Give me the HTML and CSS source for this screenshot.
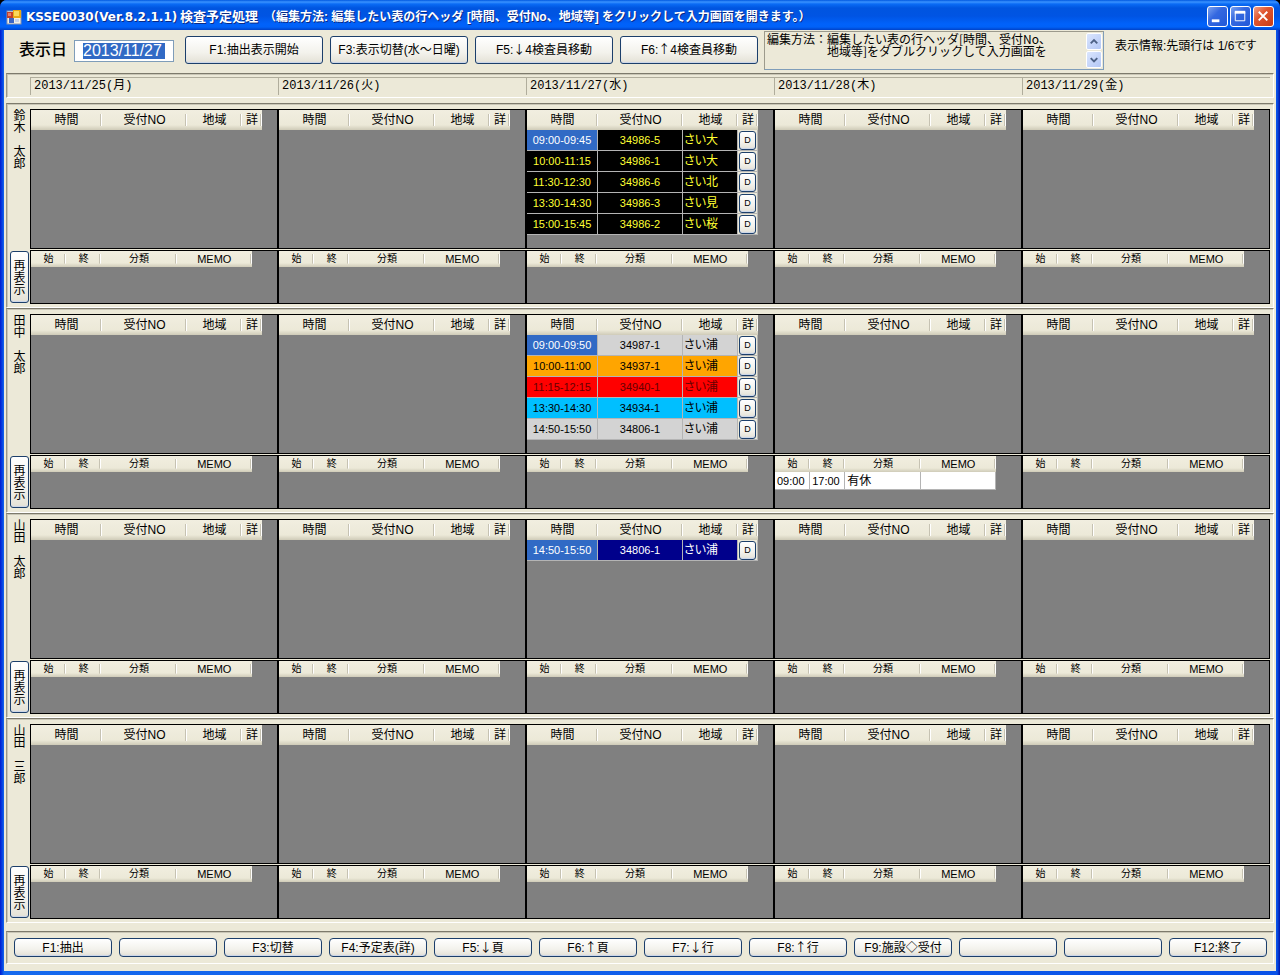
FILE: index.html
```
<!DOCTYPE html>
<html lang="ja">
<head>
<meta charset="utf-8">
<title>検査予定処理</title>
<link rel="stylesheet" href="styles.css">
</head>
<body>
<div class="window">
  <header class="titlebar">
    <svg class="app-icon" viewBox="0 0 16 16" aria-hidden="true">
      <rect x="1" y="2" width="14" height="13" fill="#f4f1e4" stroke="#8a93ad"/>
      <rect x="1" y="3" width="6" height="6" fill="#c5402b"/>
      <rect x="2" y="4" width="3" height="3" fill="#e98066"/>
      <rect x="7" y="1" width="8" height="8" fill="#e9a915"/>
      <rect x="8" y="2" width="5" height="5" fill="#fbd95c"/>
      <rect x="3" y="9" width="5" height="5" fill="#3c66c4"/>
      <rect x="9" y="10" width="4" height="3" fill="#c9d3ea"/>
    </svg>
    <h1 class="title"><span class="title-code">KSSE0030(Ver.8.2.1.1)</span><span class="title-name">検査予定処理</span><span class="title-hint">（編集方法: 編集したい表の行ヘッダ [時間、受付No、地域等] をクリックして入力画面を開きます。）</span></h1>
    <div class="window-buttons">
      <button class="win-button" type="button" aria-label="最小化"><svg viewBox="0 0 20 20"><rect x="4" y="13" width="8" height="3" fill="#fff"/></svg></button>
      <button class="win-button" type="button" aria-label="最大化"><svg viewBox="0 0 20 20"><path d="M4.500 5v9.500h10V5" fill="none" stroke="#fff"/><rect x="4" y="4" width="11" height="3" fill="#fff"/></svg></button>
      <button class="win-button win-close" type="button" aria-label="閉じる"><svg viewBox="0 0 20 20"><path d="M5 5l9 9M14 5l-9 9" stroke="#fff" stroke-width="2" fill="none"/></svg></button>
    </div>
  </header>

  <main class="client">
    <div class="toolbar">
      <label class="date-label" for="date">表示日</label>
      <div class="date-box"><input class="date-input" id="date" type="text" value="2013/11/27"></div>
      <div class="commands">
        <button class="xp-button command" type="button">F1:抽出表示開始</button>
        <button class="xp-button command" type="button">F3:表示切替(水～日曜)</button>
        <button class="xp-button command" type="button">F5:<span class="arrow">↓</span>4検査員移動</button>
        <button class="xp-button command" type="button">F6:<span class="arrow">↑</span>4検査員移動</button>
      </div>
      <div class="help">
        <textarea class="help-text" readonly aria-label="編集方法">編集方法：編集したい表の行ヘッダ[時間、受付No、
　　　　　地域等]をダブルクリックして入力画面を</textarea>
        <div class="scroller">
          <button class="scroll-button" type="button" aria-label="上へ"><svg viewBox="0 0 14 16"><path d="M3.500 10L7 6.500l3.500 3.500" fill="none" stroke="#4d6185" stroke-width="2"/></svg></button>
          <button class="scroll-button" type="button" aria-label="下へ"><svg viewBox="0 0 14 16"><path d="M3.500 6.500L7 10l3.500-3.500" fill="none" stroke="#4d6185" stroke-width="2"/></svg></button>
        </div>
      </div>
      <p class="status">表示情報:先頭行は 1/6です</p>
    </div>

    <div class="panel dates" id="dates"></div>
    <div class="inspectors" id="inspectors"></div>
    <nav class="panel function-keys" id="function-keys" aria-label="ファンクションキー"></nav>
  </main>
</div>
<script src="app.js"></script>
</body>
</html>
```
FILE: styles.css
```
* { box-sizing: border-box; }

body {
  margin: 0;
  background: #000;
  color: #000;
  font: 12px/14px "Liberation Sans", "Noto Sans CJK JP", sans-serif;
  font-feature-settings: "palt";
}

button, input, textarea { font: inherit; color: inherit; font-feature-settings: inherit; }

.window {
  border-radius: 7px 7px 0 0;
  overflow: hidden;
  padding: 0 4px 4px;
  background: linear-gradient(90deg, #0019cf 0, #0a52e8 3px, #166aee 4px, #0a52e8 calc(100% - 3px), #0014a8 100%);
}

/* Title bar */
.titlebar {
  display: flex;
  align-items: center;
  gap: 4px;
  height: 30px;
  margin: 0 -4px;
  padding: 3px 6px 0 6px;
  background: linear-gradient(180deg, #0058e0 0, #3a93ff 2px, #0a6bf5 4px, #0055e0 8px, #0054e3 16px, #0062fb 24px, #0061f8 27px, #0042c8 30px);
}
.app-icon { width: 16px; height: 16px; flex: none; }
.title {
  flex: 1;
  display: flex;
  margin: 0;
  color: #fff;
  font-size: 12px;
  font-weight: 700;
  line-height: 16px;
  white-space: nowrap;
  text-shadow: 1px 1px 0 #0a2a86;
}
.title-code { font-family: "DejaVu Sans", sans-serif; width: 154px; }
.title-name { font-size: 13px; width: 84px; }
.title-hint { font-feature-settings: normal; }
.window-buttons { display: flex; gap: 2px; }
.win-button {
  width: 21px;
  height: 21px;
  padding: 0;
  border: 1px solid #fff;
  border-radius: 3px;
  background: linear-gradient(135deg, #7ba2f0 0, #3468e0 40%, #2158d8 100%);
}
.win-button svg { display: block; width: 19px; height: 19px; }
.win-close { background: linear-gradient(135deg, #f0a088 0, #e0552f 40%, #c83c14 100%); }

/* Client area */
.client {
  background: #ece9d8;
  padding: 0 2px 7px;
}
.toolbar {
  display: flex;
  align-items: flex-start;
  height: 43px;
  padding-left: 13px;
}
.date-label {
  width: 55px;
  padding-top: 10px;
  font-size: 16px;
  font-weight: 500;
  line-height: 20px;
}
.date-box {
  width: 100px;
  height: 22px;
  margin: 10px 11px 0 0;
  padding: 2px 8px;
  border: 1px solid #7f9db9;
  background: #fff;
}
.date-input {
  display: block;
  width: 82px;
  height: 16px;
  padding: 0;
  border: 0;
  outline: 0;
  background: #316ac5;
  color: #fff;
  font-size: 16px;
  line-height: 16px;
}
.commands { display: flex; gap: 7px; margin: 6px 6px 0 0; }
.xp-button {
  display: block;
  padding: 0;
  border: 1px solid #1c3f6b;
  border-radius: 3px;
  background: linear-gradient(180deg, #fff 0, #f3f2ec 60%, #e4e1d6 100%);
  box-shadow: inset 0 -1px 1px #c9d5ea, inset 0 1px 1px #fff;
  color: #000;
  white-space: nowrap;
  overflow: hidden;
}
.command { width: 138px; height: 28px; }
.arrow { font-family: "Noto Sans CJK JP", sans-serif; line-height: 1; }
.help {
  display: flex;
  width: 340px;
  height: 39px;
  margin-top: 1px;
  padding: 1px;
  border: 1px solid #9c9a8c;
  border-right-color: #7f9db9;
  border-bottom-color: #7f9db9;
}
.help-text {
  flex: 1;
  padding: 0 1px;
  border: 0;
  outline: 0;
  resize: none;
  overflow: hidden;
  background: none;
  font-family: "Noto Sans CJK JP", sans-serif;
  font-feature-settings: normal;
  line-height: 12px;
  white-space: pre;
}
.scroller { display: flex; flex-direction: column; gap: 1px; width: 16px; }
.scroll-button {
  flex: 1;
  padding: 0;
  border: 1px solid #fff;
  border-radius: 2px;
  background: linear-gradient(135deg, #dbe6fe, #b3c7f5);
}
.scroll-button svg { display: block; width: 14px; height: 15px; }
.status { margin: 9px 0 0 11px; white-space: nowrap; }

.panel {
  border-top: 1px solid #7d7a6c;
  border-left: 1px solid #9a9788;
  border-right: 1px solid #fff;
  border-bottom: 1px solid #fff;
  box-shadow: inset 1px 1px 0 #c9c6b6;
}

/* Date header */
.dates {
  display: flex;
  height: 25px;
  padding: 3px 3px 0 23px;
}
.date-cell {
  flex: 1;
  height: 18px;
  padding-left: 3px;
  border: solid #b0ad9c;
  border-width: 1px 0 0 1px;
  font-family: "Liberation Mono", "Noto Sans CJK JP", monospace;
  line-height: 17px;
  font-feature-settings: normal;
}

/* Inspector rows */
.inspectors { padding-top: 5px; }
.inspector {
  display: flex;
  height: 205px;
  padding: 5px 3px 3px 0;
}
.side {
  display: flex;
  flex-direction: column;
  justify-content: space-between;
  align-items: center;
  width: 23px;
  padding: 0 0 1px 1px;
}
.person, .reload {
  writing-mode: vertical-rl;
  font-family: "Noto Sans CJK JP", sans-serif;
  font-feature-settings: normal;
}
.person { margin: 0; font-size: 12px; font-weight: 400; line-height: 18px; }
.reload { width: 19px; height: 52px; text-align: center; line-height: 16px; }
.days { flex: 1; display: grid; grid-template-columns: repeat(5, 1fr); }
.day { display: flex; flex-direction: column; gap: 1px; }
.pane { border: 1px solid #000; background: #808080; overflow: hidden; }
.visits { flex: 1; }
.memos { height: 54px; }

.grid { border-collapse: separate; border-spacing: 0; table-layout: fixed; }
.grid th {
  padding: 0;
  font-weight: 400;
  background:
    linear-gradient(#c6c2b2, #c6c2b2) right 1px center / 1px 60% no-repeat,
    linear-gradient(#fff, #fff) right center / 1px 60% no-repeat,
    linear-gradient(180deg, #f1eee0 0, #ece9d8 75%, #cfcbb8 100%);
  text-align: center;
  white-space: nowrap;
}
.grid td { padding: 0; border: 1px solid #b4b4b4; border-width: 0 1px 1px 0; white-space: nowrap; }
.visit-grid { width: 231px; }
.visit-grid th { height: 20px; }
.visit-grid td { height: 21px; text-align: center; font-size: 11px; }
.visit-grid .area { text-align: left; padding-left: 1px; font-size: 12px; }
.visit-grid .detail { background: #ece9d8; }
.memo-grid { width: 221px; }
.memo-grid th { height: 16px; font-size: 10px; line-height: 12px; }
.memo-grid .memo-head { font-size: 11px; }
.memo-grid td { height: 18px; padding-left: 2px; background: #fff; font-size: 11px; }
.memo-grid .kind { font-size: 12px; }
.w-time { width: 71px; }
.w-no { width: 85px; }
.w-area { width: 55px; }
.w-detail { width: 20px; }
.w-hour { width: 35px; }
.w-memo { width: 75px; }

.black td { background: #000; color: #ff3; }
.silver td { background: #d3d3d3; }
.orange td { background: #ffa500; }
.red td { background: #f00; color: #600; }
.sky td { background: #00bfff; }
.navy td { background: #00008b; color: #fff; }
.grid .selected { background: #316ac5; color: #fff; }

.detail-button { width: 17px; height: 19px; margin: 0 auto; font-size: 9px; line-height: 15px; }

/* Function keys */
.function-keys {
  display: grid;
  grid-template-columns: repeat(12, 1fr);
  gap: 7px;
  height: 33px;
  margin-top: 8px;
  padding: 6px 6px 0 7px;
}
.function-key { height: 19px; border-radius: 4px; line-height: 16px; }
```
FILE: app.js
```
const dates = ['2013/11/25(月)', '2013/11/26(火)', '2013/11/27(水)', '2013/11/28(木)', '2013/11/29(金)'];

// visits and memos are keyed by day index: [colour, time, number, area] and [start, end, kind, memo]
const inspectors = [
  { name: '鈴木　太郎', visits: { 2: [
    ['black', '09:00-09:45', '34986-5', 'さい大'],
    ['black', '10:00-11:15', '34986-1', 'さい大'],
    ['black', '11:30-12:30', '34986-6', 'さい北'],
    ['black', '13:30-14:30', '34986-3', 'さい見'],
    ['black', '15:00-15:45', '34986-2', 'さい桜']] } },
  { name: '田中　太郎', visits: { 2: [
    ['silver', '09:00-09:50', '34987-1', 'さい浦'],
    ['orange', '10:00-11:00', '34937-1', 'さい浦'],
    ['red', '11:15-12:15', '34940-1', 'さい浦'],
    ['sky', '13:30-14:30', '34934-1', 'さい浦'],
    ['silver', '14:50-15:50', '34806-1', 'さい浦']] },
    memos: { 3: [['09:00', '17:00', '有休', '']] } },
  { name: '山田　太郎', visits: { 2: [['navy', '14:50-15:50', '34806-1', 'さい浦']] } },
  { name: '山田　三郎' }
];

const functionKeys = ['F1:抽出', '', 'F3:切替', 'F4:予定表(詳)', 'F5:↓頁', 'F6:↑頁', 'F7:↓行', 'F8:↑行', 'F9:施設◇受付', '', '', 'F12:終了'];

function visitRow([colour, time, number, area], index) {
  return `<tr class="${colour}"><td class="${index ? '' : 'selected'}">${time}</td><td>${number}</td>` +
    `<td class="area">${area}</td><td class="detail"><button class="xp-button detail-button" type="button">D</button></td></tr>`;
}

function memoRow([start, end, kind, memo]) {
  return `<tr><td>${start}</td><td>${end}</td><td class="kind">${kind}</td><td>${memo}</td></tr>`;
}

function day(visits = [], memos = []) {
  return `<div class="day">
    <div class="pane visits"><table class="grid visit-grid">
      <thead><tr><th class="w-time">時間</th><th class="w-no">受付NO</th><th class="w-area">地域</th><th class="w-detail">詳</th></tr></thead>
      <tbody>${visits.map(visitRow).join('')}</tbody></table></div>
    <div class="pane memos"><table class="grid memo-grid">
      <thead><tr><th class="w-hour">始</th><th class="w-hour">終</th><th class="w-memo">分類</th><th class="w-memo memo-head">MEMO</th></tr></thead>
      <tbody>${memos.map(memoRow).join('')}</tbody></table></div>
  </div>`;
}

document.getElementById('dates').innerHTML =
  dates.map(date => `<div class="date-cell">${date}</div>`).join('');

document.getElementById('inspectors').innerHTML = inspectors.map(({ name, visits = {}, memos = {} }) =>
  `<section class="panel inspector">
    <div class="side"><h2 class="person">${name}</h2><button class="xp-button reload" type="button">再表示</button></div>
    <div class="days">${dates.map((_, i) => day(visits[i], memos[i])).join('')}</div>
  </section>`).join('');

document.getElementById('function-keys').innerHTML =
  functionKeys.map((key, i) => {
    const label = key.replace(/[↑↓]/, '<span class="arrow">$&</span>');
    return `<button class="xp-button function-key" type="button" aria-label="${key || 'F' + (i + 1)}">${label}</button>`;
  }).join('');
```
